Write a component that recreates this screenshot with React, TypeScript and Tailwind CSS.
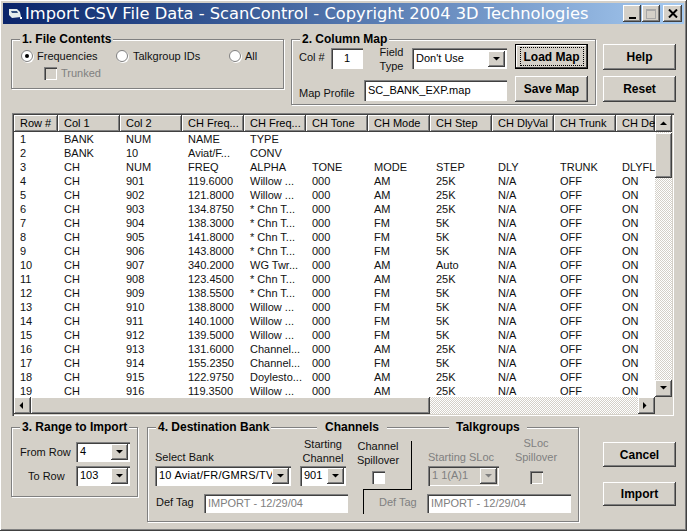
import React from "react";

const raised = "shadow-[inset_-1px_-1px_0_#404040,inset_1px_1px_0_#fff,inset_-2px_-2px_0_#808080]";
const sunken = "shadow-[inset_1px_1px_0_#808080,inset_2px_2px_0_#404040,inset_-1px_-1px_0_#fff]";
const etched = "border border-[#808080] shadow-[1px_1px_0_#fff,inset_1px_1px_0_#fff]";
const dither = "bg-[repeating-conic-gradient(#fff_0_25%,#d4d0c8_0_50%)] bg-[length:2px_2px]";

type IconKind = "up" | "down" | "left" | "right";

function Arrow({ kind, color = "#000" }: { kind: IconKind; color?: string }) {
  const pts = {
    up: "0,4 7,4 3.5,0.5",
    down: "0,0 7,0 3.5,3.5",
    left: "4,0 4,7 0.5,3.5",
    right: "0,0 0,7 3.5,3.5",
  }[kind];
  return (
    <svg width="7" height="7" viewBox="0 0 7 7" className={kind === "left" || kind === "right" ? "" : "mt-[2px]"}>
      <polygon points={pts} fill={color} />
    </svg>
  );
}

function ArrowBtn({ kind, className = "", color }: { kind: IconKind; className?: string; color?: string }) {
  return (
    <div className={`flex shrink-0 items-center justify-center bg-[#d4d0c8] ${raised} ${className}`}>
      <Arrow kind={kind} color={color} />
    </div>
  );
}

function Group({ title, className, children }: { title: string; className: string; children: React.ReactNode }) {
  return (
    <div className={`relative ${etched} ${className}`}>
      <span className="absolute left-[8px] top-[-8px] bg-[#d4d0c8] px-[2px] text-[12px] font-bold leading-[14px] text-black">
        {title}
      </span>
      {children}
    </div>
  );
}

function Btn({ label, className = "", focus = false }: { label: string; className?: string; focus?: boolean }) {
  return (
    <div
      className={`flex items-center justify-center bg-[#d4d0c8] text-[12px] font-bold text-black ${
        focus ? "border border-black shadow-[inset_-1px_-1px_0_#404040,inset_1px_1px_0_#fff]" : raised
      } ${className}`}
    >
      {focus ? (
        <span className="flex h-[19px] w-[64px] items-center justify-center border border-dotted border-black">{label}</span>
      ) : (
        label
      )}
    </div>
  );
}

function Combo({
  value,
  className,
  disabled = false,
  btn = "w-[17px]",
}: {
  value: string;
  className: string;
  disabled?: boolean;
  btn?: string;
}) {
  return (
    <div className={`flex overflow-hidden p-[2px] ${disabled ? "bg-[#d4d0c8] text-[#808080]" : "bg-white text-black"} ${sunken} ${className}`}>
      <span className="min-w-0 flex-1 overflow-hidden whitespace-nowrap pl-[2px] leading-[15px]">{value}</span>
      <ArrowBtn kind="down" className={btn} color={disabled ? "#808080" : "#000"} />
    </div>
  );
}

function Field({ value, className, disabled = false }: { value: string; className: string; disabled?: boolean }) {
  return (
    <div className={`flex items-center whitespace-nowrap bg-white px-[4px] ${disabled ? "text-[#808080]" : "text-black"} ${sunken} ${className}`}>
      {value}
    </div>
  );
}

function Radio({ checked = false }: { checked?: boolean }) {
  return (
    <span className="relative flex h-[12px] w-[12px] shrink-0 items-center justify-center rounded-full border border-[#808080] bg-white shadow-[1px_1px_0_#fff]">
      {checked && <span className="h-[4px] w-[4px] rounded-full bg-black" />}
    </span>
  );
}

function Check({ className = "", disabled = false }: { className?: string; disabled?: boolean }) {
  return <span className={`block h-[13px] w-[13px] shrink-0 ${disabled ? "bg-[#d4d0c8]" : "bg-white"} ${sunken} ${className}`} />;
}

const headers = ["Row #", "Col 1", "Col 2", "CH Freq...", "CH Freq...", "CH Tone", "CH Mode", "CH Step", "CH DlyVal", "CH Trunk", "CH De"];

const rows: string[][] = [
  ["1", "BANK", "NUM", "NAME", "TYPE", "", "", "", "", "", ""],
  ["2", "BANK", "10", "Aviat/F...", "CONV", "", "", "", "", "", ""],
  ["3", "CH", "NUM", "FREQ", "ALPHA", "TONE", "MODE", "STEP", "DLY", "TRUNK", "DLYFL"],
  ["4", "CH", "901", "119.6000", "Willow ...", "000", "AM", "25K", "N/A", "OFF", "ON"],
  ["5", "CH", "902", "121.8000", "Willow ...", "000", "AM", "25K", "N/A", "OFF", "ON"],
  ["6", "CH", "903", "134.8750", "* Chn T...", "000", "AM", "25K", "N/A", "OFF", "ON"],
  ["7", "CH", "904", "138.3000", "* Chn T...", "000", "FM", "5K", "N/A", "OFF", "ON"],
  ["8", "CH", "905", "141.8000", "* Chn T...", "000", "FM", "5K", "N/A", "OFF", "ON"],
  ["9", "CH", "906", "143.8000", "* Chn T...", "000", "FM", "5K", "N/A", "OFF", "ON"],
  ["10", "CH", "907", "340.2000", "WG Twr...", "000", "AM", "Auto", "N/A", "OFF", "ON"],
  ["11", "CH", "908", "123.4500", "* Chn T...", "000", "AM", "25K", "N/A", "OFF", "ON"],
  ["12", "CH", "909", "138.5500", "* Chn T...", "000", "FM", "5K", "N/A", "OFF", "ON"],
  ["13", "CH", "910", "138.8000", "Willow ...", "000", "FM", "5K", "N/A", "OFF", "ON"],
  ["14", "CH", "911", "140.1000", "Willow ...", "000", "FM", "5K", "N/A", "OFF", "ON"],
  ["15", "CH", "912", "139.5000", "Willow ...", "000", "FM", "5K", "N/A", "OFF", "ON"],
  ["16", "CH", "913", "131.6000", "Channel...", "000", "AM", "25K", "N/A", "OFF", "ON"],
  ["17", "CH", "914", "155.2350", "Channel...", "000", "FM", "5K", "N/A", "OFF", "ON"],
  ["18", "CH", "915", "122.9750", "Doylesto...", "000", "AM", "25K", "N/A", "OFF", "ON"],
  ["19", "CH", "916", "119.3500", "Willow ...", "000", "AM", "25K", "N/A", "OFF", "ON"],
];

const gridCols = "grid grid-cols-[44px_repeat(9,62px)_39px]";

function Table() {
  return (
    <div className={`mx-[9px] mt-[8px] flex h-[303px] w-[662px] flex-col overflow-hidden bg-[#d4d0c8] p-[2px] ${sunken}`}>
      <div className="flex min-h-0 flex-1">
        <div className="w-[641px] overflow-hidden bg-white">
          <div className={gridCols}>
            {headers.map((h, i) => (
              <div key={i} className={`flex h-[17px] items-center overflow-hidden whitespace-nowrap bg-[#d4d0c8] pl-[6px] text-[#000] ${raised}`}>
                {h}
              </div>
            ))}
          </div>
          {rows.map((r) => (
            <div key={r[0]} className={`${gridCols} h-[14px] leading-[14px]`}>
              {r.map((c, j) => (
                <span key={j} className="overflow-hidden whitespace-nowrap pl-[6px]">
                  {c}
                </span>
              ))}
            </div>
          ))}
        </div>
        <div className={`flex w-[17px] flex-col ${dither}`}>
          <ArrowBtn kind="up" className="h-[17px] w-[17px]" />
          <div className={`mt-px h-[45px] w-[17px] bg-[#d4d0c8] ${raised}`} />
          <div className="flex-1" />
          <ArrowBtn kind="down" className="h-[17px] w-[17px]" />
        </div>
      </div>
      <div className="flex h-[17px]">
        <div className={`flex w-[641px] ${dither}`}>
          <ArrowBtn kind="left" className="h-[17px] w-[17px]" />
          <div className={`h-[17px] w-[399px] bg-[#d4d0c8] ${raised}`} />
          <div className="flex-1" />
          <ArrowBtn kind="right" className="h-[17px] w-[17px]" />
        </div>
      </div>
    </div>
  );
}

export default function App() {
  return (
    <div className="h-[531px] w-[687px] overflow-hidden bg-[#d4d0c8] font-['Liberation_Sans',Arial,sans-serif] text-[11px] text-[#111]">
      <div className={`flex h-[531px] flex-col p-[3px] ${raised}`}>
        {/* Title bar */}
        <div className="flex h-[21px] shrink-0 items-center bg-gradient-to-r from-[#0a246a] to-[#a6caf0] pl-[2px] pr-[2px]">
          <svg width="17" height="15" viewBox="0 0 17 15" className="ml-[1px] shrink-0">
            <polygon points="3,3 11,3 14,6 15,11 6,12 3,9" fill="#e4ecec" />
            <polygon points="5,5 11,5 12,7 6,7" fill="#33507f" />
            <rect x="14" y="11" width="2" height="2" fill="#fff" />
          </svg>
          <span className="ml-[2px] whitespace-nowrap font-['DejaVu_Sans',sans-serif] text-[16.3px] leading-[21px] text-white">
            Import CSV File Data - ScanControl - Copyright 2004 3D Technologies
          </span>
          <div className="ml-auto flex">
            <div className={`flex h-[17px] w-[18px] items-end justify-center bg-[#d4d0c8] pb-[3px] ${raised}`}>
              <span className="block h-[2px] w-[7px] bg-black" />
            </div>
            <div className={`ml-px flex h-[17px] w-[18px] items-center justify-center bg-[#d4d0c8] ${raised}`}>
              <span className="block h-[10px] w-[10px] border border-t-2 border-[#a8a8a8]" />
            </div>
            <div className={`ml-[3px] flex h-[17px] w-[19px] items-center justify-center bg-[#d4d0c8] ${raised}`}>
              <svg width="10" height="9" viewBox="0 0 10 9">
                <path d="M1 0.5 L9 8.5 M9 0.5 L1 8.5" stroke="#000" strokeWidth="2" />
              </svg>
            </div>
          </div>
        </div>

        {/* Top row */}
        <div className="mt-[15px] flex h-[66px] shrink-0 items-start pl-[8px]">
          <Group title="1. File Contents" className="h-[50px] w-[273px] shrink-0">
            <div className="mt-[8px] flex h-[16px] items-center pl-[9px]">
              <Radio checked />
              <span className="ml-[4px] w-[58px] whitespace-nowrap">Frequencies</span>
              <span className="ml-[21px]"><Radio /></span>
              <span className="ml-[5px] w-[67px] whitespace-nowrap">Talkgroup IDs</span>
              <span className="ml-[29px]"><Radio /></span>
              <span className="ml-[4px]">All</span>
            </div>
            <div className="mt-[2px] flex h-[14px] items-center pl-[32px] text-[#808080]">
              <Check disabled />
              <span className="ml-[4px]">Trunked</span>
            </div>
          </Group>

          <Group title="2. Column Map" className="ml-[7px] h-[66px] w-[305px] shrink-0">
            <div className="flex h-[34px] pl-[7px]">
              <span className="mt-[9px] w-[32px]">Col #</span>
              <Field value="1" className="mt-[8px] h-[21px] w-[32px] justify-center" />
              <span className="ml-[10px] mt-[5px] w-[37px] text-center leading-[14px]">Field<br />Type</span>
              <Combo value="Don't Use" className="ml-[2px] mt-[8px] h-[21px] w-[95px] shrink-0 pt-[3px]" />
              <Btn label="Load Map" focus className="ml-[8px] mt-[4px] h-[25px] w-[73px] shrink-0" />
            </div>
            <div className="flex h-[31px] items-start pl-[7px]">
              <span className="mt-[11px] w-[65px]">Map Profile</span>
              <Field value="SC_BANK_EXP.map" className="mt-[6px] h-[21px] w-[143px]" />
              <Btn label="Save Map" className="ml-[8px] mt-[2px] h-[26px] w-[73px] shrink-0" />
            </div>
          </Group>

          <div className="ml-[7px] flex flex-col pt-[5px]">
            <Btn label="Help" className="h-[26px] w-[73px]" />
            <Btn label="Reset" className="mt-[6px] h-[26px] w-[73px]" />
          </div>
        </div>

        <Table />

        {/* Bottom row */}
        <div className="mt-[11px] flex items-start pl-[8px]">
          <Group title="3. Range to Import" className="h-[70px] w-[127px] shrink-0">
            <div className="mt-[13px] flex h-[22px] items-center pl-[8px]">
              <span className="w-[56px] whitespace-nowrap">From Row</span>
              <Combo value="4" className="h-[20px] w-[54px] pt-[2px]" />
            </div>
            <div className="mt-[2px] flex h-[22px] items-center pl-[16px]">
              <span className="w-[48px] whitespace-nowrap">To Row</span>
              <Combo value="103" className="h-[20px] w-[54px] pt-[2px]" />
            </div>
          </Group>

          <Group title="4. Destination Bank" className="relative ml-[9px] h-[95px] w-[432px] shrink-0">
            <span className="absolute left-[169px] top-[-8px] bg-[#d4d0c8] px-[8px] text-[12px] font-bold leading-[14px] text-black">Channels</span>
            <span className="absolute left-[301px] top-[-8px] bg-[#d4d0c8] px-[7px] text-[12px] font-bold leading-[14px] text-black">Talkgroups</span>
            <div className="absolute left-[215px] top-[13px] h-[49px] w-[49px] border-b border-r border-black" />
            <div className="absolute left-[215px] top-[61px] h-[25px] w-px bg-black" />
            <div className="flex h-[58px] items-end pl-[7px]">
              <div className="w-[136px]">
                <div className="mb-[2px] leading-[14px]">Select Bank</div>
                <Combo value="10 Aviat/FR/GMRS/TV" className="h-[20px] w-[136px] pt-[2px] tracking-[0.25px]" />
              </div>
              <div className="ml-[9px] w-[46px]">
                <div className="mb-[1px] text-center leading-[14px]">Starting<br />Channel</div>
                <Combo value="901" className="h-[20px] w-[46px] pt-[2px]" />
              </div>
              <div className="ml-[8px] flex w-[48px] flex-col items-center">
                <div className="mb-[4px] text-center leading-[14px]">Channel<br />Spillover</div>
                <Check className="mb-[2px]" />
              </div>
              <div className="ml-[26px] w-[71px] text-[#808080]">
                <div className="mb-[2px] whitespace-nowrap leading-[14px]">Starting SLoc</div>
                <Combo value="1 1(A)1" disabled className="h-[20px] w-[71px] pt-[2px]" />
              </div>
              <div className="ml-[8px] flex w-[58px] flex-col items-center text-[#808080]">
                <div className="mb-[7px] text-center leading-[14px]">SLoc<br />Spillover</div>
                <Check disabled className="mb-[2px]" />
              </div>
            </div>
            <div className="mt-[8px] flex items-center pl-[8px]">
              <span className="-mt-[3px] w-[48px]">Def Tag</span>
              <Field value="IMPORT - 12/29/04" disabled className="h-[19px] w-[144px]" />
              <span className="-mt-[3px] ml-[31px] w-[48px] text-[#808080]">Def Tag</span>
              <Field value="IMPORT - 12/29/04" disabled className="h-[19px] w-[144px]" />
            </div>
          </Group>

          <div className="ml-[24px] flex flex-col pt-[15px]">
            <Btn label="Cancel" className="h-[25px] w-[73px]" />
            <Btn label="Import" className="mt-[15px] h-[24px] w-[73px]" />
          </div>
        </div>
      </div>
    </div>
  );
}
